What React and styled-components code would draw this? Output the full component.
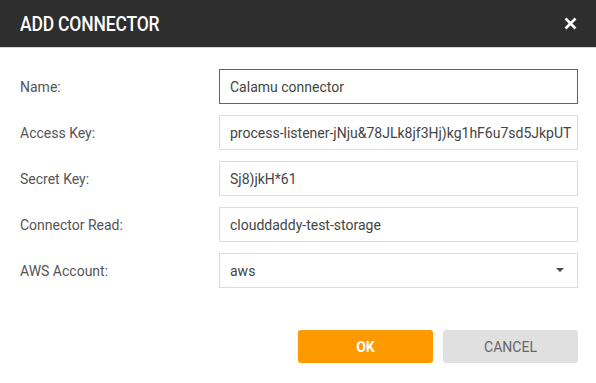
import styled, { createGlobalStyle } from "styled-components";

const Global = createGlobalStyle`
  body {
    margin: 0;
    background: #fff;
    font-family: Roboto, "Liberation Sans", sans-serif;
  }
`;

const Dialog = styled.div`
  width: 596px;
  height: 383px;
  background: #fff;
`;

const Header = styled.div`
  height: 47px;
  background: #2e2e2e;
  border-bottom: 1px solid #d8d8d8;
  display: flex;
  align-items: center;
  justify-content: space-between;
  padding: 0 19px 0 20px;
`;

/* the original uses a condensed face; squeeze Roboto to match */
const Title = styled.h1`
  margin: 0;
  color: #fff;
  font-family: Roboto, "Liberation Sans", sans-serif;
  font-weight: 500;
  font-size: 20px;
  letter-spacing: -0.2px;
  transform: scaleX(0.875);
  transform-origin: left center;
`;

const Close = styled.button`
  border: none;
  background: none;
  padding: 0;
  display: flex;
  cursor: pointer;
`;

const Form = styled.div`
  padding: 21px 18px 0 20px;
  display: flex;
  flex-direction: column;
  gap: 11px;
`;

const Row = styled.div`
  display: grid;
  grid-template-columns: 199px 1fr;
  align-items: center;
`;

const Label = styled.label`
  font-size: 14px;
  color: #555;
`;

const Field = styled.div`
  position: relative;
  height: 35px;
  box-sizing: border-box;
  border: 1px solid ${(p) => (p.$focused ? "#2d6db3" : "#dcdcdc")};
  display: flex;
  align-items: center;
  padding: 0 10px;
  font-size: 14px;
  color: #444;
  white-space: nowrap;
  overflow: hidden;
`;

const Caret = styled.span`
  position: absolute;
  right: 13px;
  top: 14px;
  width: 0;
  height: 0;
  border-left: 4px solid transparent;
  border-right: 4px solid transparent;
  border-top: 4px solid #444;
`;

const Actions = styled.div`
  display: flex;
  justify-content: flex-end;
  gap: 10px;
  padding: 42px 18px 0 0;
`;

const Button = styled.button`
  width: 135px;
  height: 33px;
  border: none;
  border-radius: 3px;
  font-family: Roboto, "Liberation Sans", sans-serif;
  font-size: 14px;
  font-weight: ${(p) => (p.$primary ? 700 : 400)};
  background: ${(p) => (p.$primary ? "#ff9900" : "#e0e0e0")};
  color: ${(p) => (p.$primary ? "#fff" : "#666")};
  cursor: pointer;
`;

const fields = [
  { label: "Name:", value: "Calamu connector", focused: true },
  { label: "Access Key:", value: "process-listener-jNju&78JLk8jf3Hj)kg1hF6u7sd5JkpUT" },
  { label: "Secret Key:", value: "Sj8)jkH*61" },
  { label: "Connector Read:", value: "clouddaddy-test-storage" },
  { label: "AWS Account:", value: "aws", select: true },
];

const App = () => {
  return (
    <Dialog>
      <Global />
      <Header>
        <Title>ADD CONNECTOR</Title>
        <Close>
          <svg width="13" height="13" viewBox="0 0 13 13">
            <path d="M1.5 1.5L11.5 11.5M11.5 1.5L1.5 11.5" stroke="#fff" strokeWidth="2.6" />
          </svg>
        </Close>
      </Header>
      <Form>
        {fields.map((f) => (
          <Row key={f.label}>
            <Label>{f.label}</Label>
            <Field $focused={f.focused}>
              {f.value}
              {f.select && <Caret />}
            </Field>
          </Row>
        ))}
      </Form>
      <Actions>
        <Button $primary>OK</Button>
        <Button>CANCEL</Button>
      </Actions>
    </Dialog>
  );
};

export default App;
